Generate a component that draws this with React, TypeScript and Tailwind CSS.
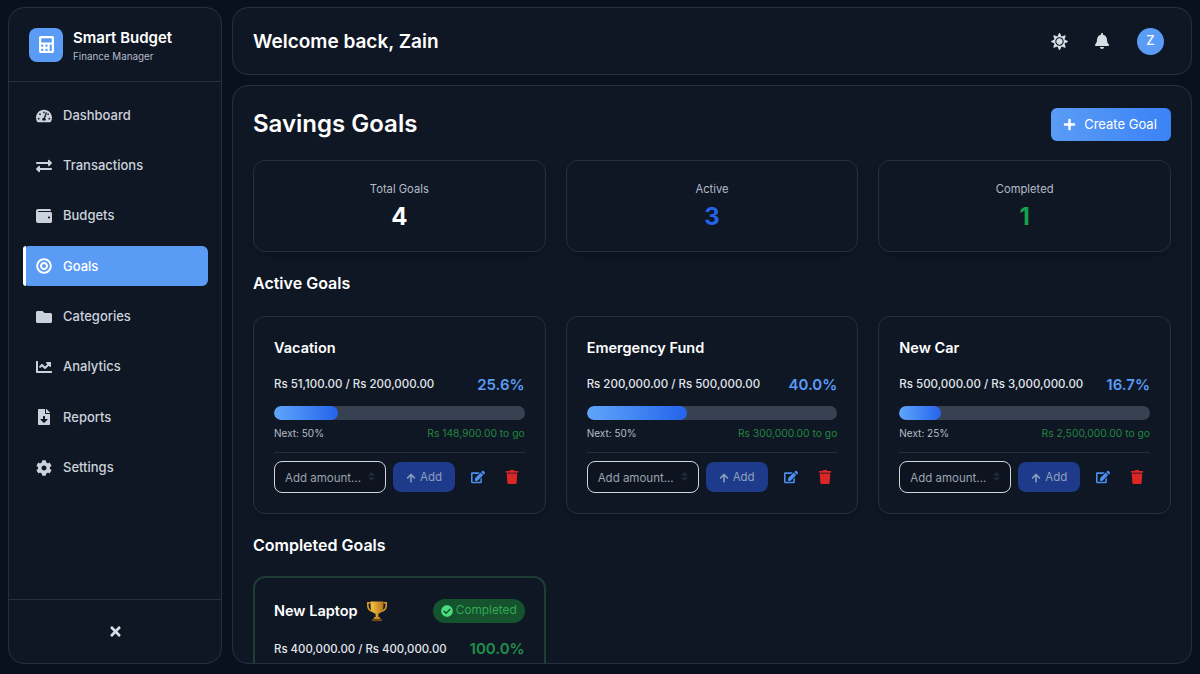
import {
  FaArrowUp,
  FaBell,
  FaBullseye,
  FaCalculator,
  FaChartLine,
  FaCheckCircle,
  FaCog,
  FaEdit,
  FaExchangeAlt,
  FaFileDownload,
  FaFolder,
  FaPlus,
  FaSort,
  FaSun,
  FaTachometerAlt,
  FaTimes,
  FaTrash,
  FaWallet,
} from "react-icons/fa";

const NAV_ITEMS = [
  { label: "Dashboard", icon: FaTachometerAlt },
  { label: "Transactions", icon: FaExchangeAlt },
  { label: "Budgets", icon: FaWallet },
  { label: "Goals", icon: FaBullseye, active: true },
  { label: "Categories", icon: FaFolder },
  { label: "Analytics", icon: FaChartLine },
  { label: "Reports", icon: FaFileDownload },
  { label: "Settings", icon: FaCog },
];

const ACTIVE_GOALS = [
  { name: "Vacation", saved: "Rs 51,100.00", target: "Rs 200,000.00", pct: 25.6, next: "50%", left: "Rs 148,900.00" },
  { name: "Emergency Fund", saved: "Rs 200,000.00", target: "Rs 500,000.00", pct: 40.0, next: "50%", left: "Rs 300,000.00" },
  { name: "New Car", saved: "Rs 500,000.00", target: "Rs 3,000,000.00", pct: 16.7, next: "25%", left: "Rs 2,500,000.00" },
];

function Sidebar() {
  return (
    <aside className="flex w-[214px] shrink-0 flex-col rounded-2xl border border-[#263140] bg-[#0f1725]">
      <div className="flex h-[74px] items-center gap-[10px] border-b border-[#263140] px-5">
        <div className="flex h-[34px] w-[34px] items-center justify-center rounded-lg bg-[#5a9cf5]">
          <FaCalculator className="text-[17px] text-white" />
        </div>
        <div className="pt-[2px]">
          <div className="text-[15px] leading-[20px] font-semibold text-white">Smart Budget</div>
          <div className="pt-[2px] text-[9.8px] leading-[14px] text-[#b4bcc8]">Finance Manager</div>
        </div>
      </div>
      <nav className="flex flex-1 flex-col gap-[10.3px] pt-[13.5px] pr-[13px] pl-[14px]">
        {NAV_ITEMS.map((item) => (
          <div
            key={item.label}
            className={`relative flex h-10 shrink-0 items-center gap-[10px] rounded-md px-3 text-[13px] font-medium ${
              item.active ? "bg-[#5a9cf5] text-white" : "text-[#ccd2db]"
            }`}
          >
            {item.active && <span className="absolute top-0 left-0 h-full w-[3px] rounded-l-md bg-white" />}
            <span className="flex w-[18px] justify-center">
              <item.icon className="text-[16px]" />
            </span>
            {item.label}
          </div>
        ))}
      </nav>
      <div className="flex h-[64px] items-center justify-center border-t border-[#263140] text-[#d8dde4]">
        <FaTimes className="text-[15px]" />
      </div>
    </aside>
  );
}

function Header() {
  return (
    <header className="flex h-[68px] shrink-0 items-center justify-between rounded-2xl border border-[#263140] bg-[#0f1725] pr-[27px] pl-5">
      <h1 className="pt-[2px] text-[19px] font-semibold text-white">Welcome back, Zain</h1>
      <div className="flex items-center gap-[26px] text-[#d8dde4]">
        <FaSun className="text-[17px]" />
        <FaBell className="text-[16px]" />
        <div className="ml-[1px] flex h-[27px] w-[27px] items-center justify-center rounded-full bg-[#5a9cf5] text-[13px] font-medium text-white">
          Z
        </div>
      </div>
    </header>
  );
}

function StatCard({ label, value, color }: { label: string; value: string; color: string }) {
  return (
    <div className="flex h-[92px] flex-col items-center justify-center gap-1 rounded-xl border border-[#263140] pt-[2px] shadow-lg">
      <div className="text-[11.2px] leading-[16px] text-[#b4bcc8]">{label}</div>
      <div className={`text-[24px] leading-[32px] font-bold ${color}`}>{value}</div>
    </div>
  );
}

function Trophy() {
  return (
    <svg viewBox="0 0 24 24" className="h-[22px] w-[22px]">
      <defs>
        <linearGradient id="cup" x1="0" x2="1" y1="0" y2="0">
          <stop offset="0" stopColor="#f5c542" />
          <stop offset="1" stopColor="#b8741a" />
        </linearGradient>
      </defs>
      <path d="M5 3H2v3c0 4 3 6 6 6.500M19 3h3v3c0 4-3 6-6 6.500" fill="none" stroke="#d9982a" strokeWidth="1.8" />
      <path d="M5 1.500h14V7c0 4.500-3 7.500-5.500 8v3.500H10.500V15C8 14.500 5 11.500 5 7z" fill="url(#cup)" />
      <path d="M9 18.500h6l1 2.500H8z" fill="#c98a24" />
      <path d="M6.500 21h11v2h-11z" fill="#7a4a18" />
    </svg>
  );
}

function GoalCard({ goal }: { goal: (typeof ACTIVE_GOALS)[number] }) {
  return (
    <div className="h-[198px] rounded-xl border border-[#263140] px-5 pt-[21px] shadow-lg">
      <h3 className="text-[14.500px] leading-[20px] font-semibold text-white">{goal.name}</h3>
      <div className="mt-[16px] flex h-[22px] items-center justify-between">
        <span className="text-[11.500px] font-medium text-[#e2e6eb]">
          {goal.saved} / {goal.target}
        </span>
        <span className="text-[15px] font-semibold text-[#5a9cf5]">{goal.pct.toFixed(1)}%</span>
      </div>
      <div className="mt-[10px] h-[14px] overflow-hidden rounded-full bg-[#374151]">
        <div
          className="h-full rounded-full bg-gradient-to-r from-[#60a5fa] to-[#2563eb]"
          style={{ width: `${goal.pct}%` }}
        />
      </div>
      <div className="mt-[6px] flex items-center justify-between leading-[14px]">
        <span className="text-[10px] text-[#b4bcc8]">Next: {goal.next}</span>
        <span className="text-[10.300px] text-[#22863f]">{goal.left} to go</span>
      </div>
      <div className="mt-[12px] flex items-center border-t border-[#263140] pt-[8px]">
        <div className="relative w-[112px]">
          <input
            placeholder="Add amount..."
            className="h-[32px] w-full rounded-lg border border-[#d1d5db] bg-[#0d1420] px-[10px] pt-[2px] text-[11.500px] placeholder:text-[#9ca3af]"
          />
          <FaSort className="absolute top-[10px] right-[9px] text-[11px] text-[#1f2937]" />
        </div>
        <div className="ml-[7px] flex h-[30px] w-[62px] items-center justify-center gap-1 rounded-lg bg-[#1e3a8a] pt-[1px] text-[11.500px] text-[#8fa0bd]">
          <FaArrowUp className="text-[10px]" />
          Add
        </div>
        <FaEdit className="ml-[16px] text-[14px] text-[#4a90ee]" />
        <FaTrash className="ml-[20px] text-[14px] text-[#dc2626]" />
      </div>
    </div>
  );
}

function CompletedCard() {
  return (
    <div className="h-[140px] rounded-xl border-2 border-[#1f3d34] px-[19px] pt-[21px]">
      <div className="flex h-[24px] items-center justify-between">
        <h3 className="flex items-center gap-2 text-[14.500px] font-semibold text-white">
          New Laptop
          <Trophy />
        </h3>
        <span className="flex h-[24px] items-center gap-[3px] rounded-full bg-[#14532d] px-2 text-[11.800px] text-[#34a853]">
          <FaCheckCircle className="text-[12px] text-[#4ade80]" />
          Completed
        </span>
      </div>
      <div className="mt-[15px] flex h-[23px] items-center justify-between">
        <span className="text-[11.400px] font-medium text-[#e2e6eb]">Rs 400,000.00 / Rs 400,000.00</span>
        <span className="text-[15px] font-semibold text-[#1f9048]">100.0%</span>
      </div>
    </div>
  );
}

export default function App() {
  return (
    <div
      className="flex h-[674px] gap-[10px] overflow-hidden bg-[#0a111e] pt-[7px] pr-2 pb-[10px] pl-2"
      style={{ fontFamily: "Inter, 'Noto Sans', sans-serif" }}
    >
      <Sidebar />
      <div className="flex min-w-0 flex-1 flex-col gap-[10px]">
        <Header />
        <main className="min-h-0 flex-1 overflow-hidden rounded-2xl border border-[#263140] bg-[#0f1725] px-5 pt-[21px]">
          <div className="flex h-[34px] items-center justify-between">
            <h2 className="text-[24px] font-semibold text-white">Savings Goals</h2>
            <div className="flex h-[33px] w-[120px] items-center justify-center gap-2 rounded-md bg-gradient-to-r from-[#5a9cf5] to-[#3b82f6] pt-[1px] pr-[2px] text-[13px] text-white">
              <FaPlus className="text-[13px]" />
              Create Goal
            </div>
          </div>
          <div className="mt-[19px] grid grid-cols-3 gap-5">
            <StatCard label="Total Goals" value="4" color="text-white" />
            <StatCard label="Active" value="3" color="text-[#2563eb]" />
            <StatCard label="Completed" value="1" color="text-[#16a34a]" />
          </div>
          <h2 className="mt-[20px] text-[16px] leading-[22px] font-semibold text-white">Active Goals</h2>
          <div className="mt-[22px] grid grid-cols-3 gap-5">
            {ACTIVE_GOALS.map((goal) => (
              <GoalCard key={goal.name} goal={goal} />
            ))}
          </div>
          <h2 className="mt-[20px] text-[16px] leading-[22px] font-semibold text-white">Completed Goals</h2>
          <div className="mt-[20px] grid grid-cols-3 gap-5">
            <CompletedCard />
          </div>
        </main>
      </div>
    </div>
  );
}
